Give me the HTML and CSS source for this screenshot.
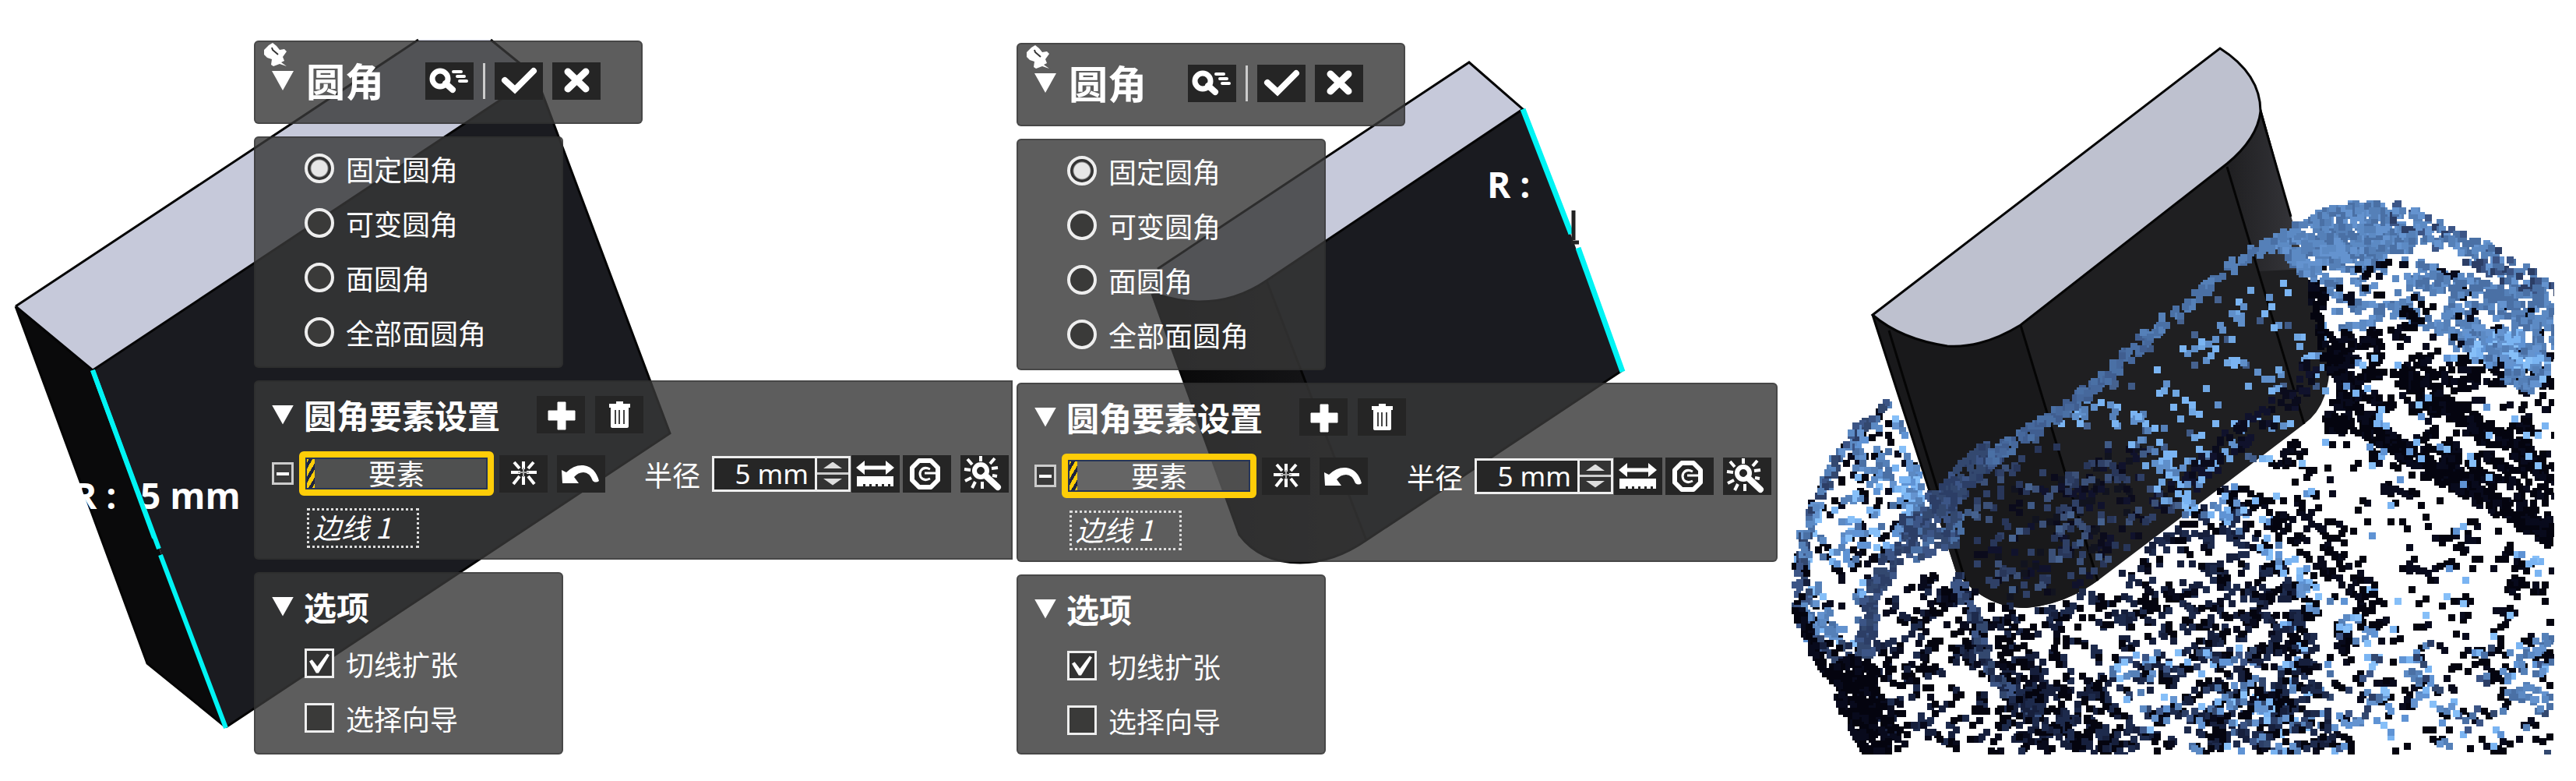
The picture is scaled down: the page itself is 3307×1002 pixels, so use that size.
FILE: index.html
```html
<!DOCTYPE html>
<html lang="zh-CN">
<head>
    <meta charset="UTF-8">
    <meta name="viewport" content="width=device-width, initial-scale=1.0">
    <title>圆角</title>
    <link rel="stylesheet" href="styles.css">
</head>
<body>
    <svg class="defs" aria-hidden="true">
        <symbol id="pin" viewBox="0 0 32 32">
            <path d="M2 10 L8 4 L13 1 L18 5 L22 10 L28 9 L31 12 L26 19 L28 24 L24 26 L31 31 L22 28 L14 31 L11 29 L12 22 L6 20 L2 16 Z" fill="#fff"/>
            <path d="M12 7 L13 10 L20 16" fill="none" stroke="#333" stroke-width="2"/>
        </symbol>
        <symbol id="search" viewBox="0 0 62 48">
            <circle cx="19" cy="21" r="10" fill="none" stroke="#fff" stroke-width="7"/>
            <path d="M26 27 L35 35" stroke="#fff" stroke-width="8" stroke-linecap="round"/>
            <path d="M36 12 H46 M41 18 H50 M44 24 H53" stroke="#fff" stroke-width="4" stroke-linecap="round"/>
        </symbol>
        <symbol id="check" viewBox="0 0 62 48">
            <path d="M13 23 L26 35 L50 11" fill="none" stroke="#fff" stroke-width="8" stroke-linecap="round"/>
        </symbol>
        <symbol id="cross" viewBox="0 0 62 48">
            <path d="M20 12 L43 34 M43 12 L20 34" stroke="#fff" stroke-width="9" stroke-linecap="round"/>
        </symbol>
        <symbol id="plus" viewBox="0 0 62 48">
            <path d="M27 8 H37 V19 H49 V31 H37 V43 H27 V31 H15 V19 H27 Z" fill="#fff" stroke="#fff" stroke-width="1" stroke-linejoin="round"/>
        </symbol>
        <symbol id="trash" viewBox="0 0 62 48">
            <path d="M27 10 V7 H36 V10 H45 V15 H43 V39 Q43 41 40 41 H23 Q20 41 20 39 V15 H18 V10 Z" fill="#fff"/>
            <path d="M26 18 V36 M31 18 V36 M37 18 V36" stroke="#444" stroke-width="2"/>
        </symbol>
        <symbol id="burst" viewBox="0 0 62 48">
            <path d="M15 22 H27 M35 22 H48 M31 8 V18 M31 27 V38 M19 9 L26 17 M44 9 L37 17 M18 37 L26 27 M45 37 L37 27" stroke="#fff" stroke-width="4"/>
            <path d="M24 22 H38 M31 16 V28" stroke="#aaa" stroke-width="2"/>
        </symbol>
        <symbol id="undo" viewBox="0 0 62 48">
            <path d="M6 19 L12 22 Q22 12 34 13 Q49 15 54 33 Q50 36 46 33 Q42 22 34 22 Q27 22 22 28 L28 36 H7 Z" fill="#fff"/>
        </symbol>
        <symbol id="ruler" viewBox="0 0 62 48">
            <path d="M14 16 H47" stroke="#fff" stroke-width="5"/>
            <path d="M6 16 L17 7 V25 Z M55 16 L44 7 V25 Z" fill="#fff"/>
            <path d="M7 27 H54 V40 H50 V37 H47 V40 H42 V37 H39 V40 H34 V37 H31 V40 H26 V37 H23 V40 H18 V37 H15 V40 H7 Z" fill="#fff"/>
        </symbol>
        <symbol id="circle" viewBox="0 0 62 48">
            <path d="M21 7 H36 L45 16 V32 L36 41 H21 L12 32 V16 Z" fill="none" stroke="#fff" stroke-width="6" stroke-linejoin="round"/>
            <path d="M35 18 Q27 14 23 20 Q21 24 23 28 Q27 34 35 30 M28 23 H45" fill="none" stroke="#fff" stroke-width="3"/>
        </symbol>
        <symbol id="wand" viewBox="0 0 62 48">
            <circle cx="26" cy="20" r="8" fill="none" stroke="#fff" stroke-width="6"/>
            <path d="M32 26 L48 41" stroke="#fff" stroke-width="8" stroke-linecap="round"/>
            <path d="M26 1 V8 M9 5 L15 12 M44 4 L38 11 M5 18 L13 19 M40 17 L48 16 M6 33 L14 29 M15 42 L19 34 M28 34 V43 M41 26 L47 27" stroke="#fff" stroke-width="4"/>
        </symbol>
    </svg>

    <main class="board">
        <section class="pane pane-before">
            <svg class="scene" viewBox="0 0 1300 968">
                <polygon points="20,393 119,475 290,933 189,851" fill="#0a0a0b"/>
                <polygon points="119,475 688,98 860,556 290,933" fill="#1a1b20"/>
                <polygon points="20,393 537,51 630,51 688,98 119,475" fill="#c6c9da"/>
                <path d="M20 393 L537 51 M630 51 L688 98 L860 556 L290 933 M20 393 L119 475 L688 98 M20 393 L189 851 L290 933" fill="none" stroke="#050505" stroke-width="3"/>
                <path d="M119 475 L204 704 M206 712 L290 934" stroke="#00f4f4" stroke-width="6"/>
                <text class="dim" x="94" y="653">R :</text>
                <text class="dim" x="180" y="653">5 mm</text>
                <path d="M119 475 L198 690" stroke="#00f4f4" stroke-width="6"/>
            </svg>
            <header class="panel head">
                <svg class="pin"><use href="#pin"/></svg>
                <span class="tri"></span>
                <h1>圆角</h1>
                <button class="icon first" aria-label="预览"><svg><use href="#search"/></svg></button>
                <span class="sep"></span>
                <button class="icon" aria-label="确定"><svg><use href="#check"/></svg></button>
                <button class="icon" aria-label="取消"><svg><use href="#cross"/></svg></button>
            </header>
            <div class="panel types">
                <label><input type="radio" name="type1" checked>固定圆角</label>
                <label><input type="radio" name="type1">可变圆角</label>
                <label><input type="radio" name="type1">面圆角</label>
                <label><input type="radio" name="type1">全部面圆角</label>
            </div>
            <div class="panel settings">
                <div class="row">
                    <span class="tri"></span>
                    <h2>圆角要素设置</h2>
                    <button class="icon first" aria-label="添加"><svg><use href="#plus"/></svg></button>
                    <button class="icon" aria-label="删除"><svg><use href="#trash"/></svg></button>
                </div>
                <div class="row fields">
                    <button class="fold" aria-label="折叠"></button>
                    <button class="element">要素</button>
                    <button class="icon" aria-label="反选"><svg><use href="#burst"/></svg></button>
                    <button class="icon undo" aria-label="撤销"><svg><use href="#undo"/></svg></button>
                    <label class="radius" for="radius1">半径</label>
                    <div class="spin">
                        <input id="radius1" type="text" value="5 mm">
                        <div class="steps"><button class="up" aria-label="增加"></button><button class="down" aria-label="减少"></button></div>
                    </div>
                    <button class="icon" aria-label="测量"><svg><use href="#ruler"/></svg></button>
                    <button class="icon circ" aria-label="圆"><svg><use href="#circle"/></svg></button>
                    <button class="icon wand" aria-label="估算"><svg><use href="#wand"/></svg></button>
                </div>
                <div class="edge">边线 1</div>
            </div>
            <div class="panel options">
                <div class="row title"><span class="tri"></span><h2>选项</h2></div>
                <label><input type="checkbox" checked>切线扩张</label>
                <label><input type="checkbox">选择向导</label>
            </div>
        </section>

        <section class="pane pane-after">
            <svg class="scene" viewBox="1305 0 977 968">
                <defs>
                    <linearGradient id="round" x1="0" x2="1" y1="0" y2="0">
                        <stop offset="0" stop-color="#070707"/>
                        <stop offset="1" stop-color="#19191c"/>
                    </linearGradient>
                </defs>
                <path d="M1479 377 L1591 686 Q1618 722 1669 722 Q1712 722 1754 693 L1626 360 Z" fill="url(#round)"/>
                <polygon points="1626,360 1955,140 2083,475 1754,693" fill="#1a1b20"/>
                <path d="M1486 345 L1886 80 L1955 140 L1626 360 Q1585 388 1537 387 Q1500 385 1479 374 Q1476 354 1486 345 Z" fill="#c6c9da"/>
                <path d="M1486 345 L1886 80 L1955 140 L1626 360 Q1585 388 1537 387 Q1500 385 1479 374 M1626 360 L1754 693 L2083 475 M1479 377 L1591 686 Q1618 722 1669 722 Q1712 722 1754 693" fill="none" stroke="#050505" stroke-width="3"/>
                <path d="M1955 140 L2017 300 M2026 318 L2083 477" stroke="#00f4f4" stroke-width="7"/>
                <path d="M2020 270 V308 M2017 311 H2027" stroke="#222" stroke-width="5"/>
                <text class="dim" x="1909" y="254">R :</text>
            </svg>
            <header class="panel head">
                <svg class="pin"><use href="#pin"/></svg>
                <span class="tri"></span>
                <h1>圆角</h1>
                <button class="icon first" aria-label="预览"><svg><use href="#search"/></svg></button>
                <span class="sep"></span>
                <button class="icon" aria-label="确定"><svg><use href="#check"/></svg></button>
                <button class="icon" aria-label="取消"><svg><use href="#cross"/></svg></button>
            </header>
            <div class="panel types">
                <label><input type="radio" name="type2" checked>固定圆角</label>
                <label><input type="radio" name="type2">可变圆角</label>
                <label><input type="radio" name="type2">面圆角</label>
                <label><input type="radio" name="type2">全部面圆角</label>
            </div>
            <div class="panel settings">
                <div class="row">
                    <span class="tri"></span>
                    <h2>圆角要素设置</h2>
                    <button class="icon first" aria-label="添加"><svg><use href="#plus"/></svg></button>
                    <button class="icon" aria-label="删除"><svg><use href="#trash"/></svg></button>
                </div>
                <div class="row fields">
                    <button class="fold" aria-label="折叠"></button>
                    <button class="element">要素</button>
                    <button class="icon" aria-label="反选"><svg><use href="#burst"/></svg></button>
                    <button class="icon undo" aria-label="撤销"><svg><use href="#undo"/></svg></button>
                    <label class="radius" for="radius2">半径</label>
                    <div class="spin">
                        <input id="radius2" type="text" value="5 mm">
                        <div class="steps"><button class="up" aria-label="增加"></button><button class="down" aria-label="减少"></button></div>
                    </div>
                    <button class="icon" aria-label="测量"><svg><use href="#ruler"/></svg></button>
                    <button class="icon circ" aria-label="圆"><svg><use href="#circle"/></svg></button>
                    <button class="icon wand" aria-label="估算"><svg><use href="#wand"/></svg></button>
                </div>
                <div class="edge">边线 1</div>
            </div>
            <div class="panel options">
                <div class="row title"><span class="tri"></span><h2>选项</h2></div>
                <label><input type="checkbox" checked>切线扩张</label>
                <label><input type="checkbox">选择向导</label>
            </div>
        </section>

        <section class="pane pane-cloud">
            <svg class="scene" viewBox="2287 0 1020 968">
                <defs>
                    <linearGradient id="side" x1="0" x2="1" y1="0" y2="0">
                        <stop offset="0" stop-color="#1f1f21"/>
                        <stop offset="1" stop-color="#38383d"/>
                    </linearGradient>
                </defs>
                <path d="M2404 404 L2511 734 Q2548 780 2601 780 Q2650 776 2693 745 L2958 544 Q2992 520 2991 459 L2903 140 Z" fill="#1f1f21"/>
                <path d="M2404 404 L2511 734 Q2548 780 2601 780 Q2650 776 2693 745 L2594 417 Z" fill="#19191b"/>
                <path d="M2859 214 L2903 140 L2960 345 L2900 348 Z" fill="url(#side)"/>
                <path d="M2404 404 L2850 62 Q2902 95 2902 143 Q2898 178 2859 210 L2594 417 Q2545 447 2500 444 Q2440 435 2404 404 Z" fill="#bec1cf" stroke="#050505" stroke-width="3"/>
                <path d="M2594 417 L2693 745 M2859 214 L2958 544 M2425 424 L2523 745 M2404 404 L2490 670 M2902 143 L2941 278" fill="none" stroke="#050505" stroke-width="3"/>
            </svg>
            <canvas id="cloud" class="scene" width="1020" height="968"></canvas>
        </section>
    </main>
    <script src="cloud.js"></script>
</body>
</html>
```
FILE: styles.css
```css
* {box-sizing: border-box;}
body {margin: 0; background: white; color: white; font: 36px/48px "Noto Sans CJK SC", sans-serif;}
h1, h2 {margin: 0; font-weight: bold; white-space: nowrap;}
h1 {font-size: 50px; line-height: 50px;}
h2 {font-size: 42px; line-height: 48px;}
button {padding: 0; border: 0; font: inherit; color: inherit;}
.defs {position: absolute; width: 0; height: 0;}

.board {display: grid; grid-template-columns: 1300fr 977fr 1020fr; gap: 5px;}
.pane {position: relative; display: flex; flex-direction: column; gap: 16px; min-width: 0;}
.pane-before {padding: 52px 0 0 326px;}
.pane-after {padding-top: 55px;}
.scene {position: absolute; top: 0; left: 0; width: 100%; height: auto;}
.dim {font: bold 46px "Open Sans", sans-serif; fill: white;}

.panel {position: relative; border-radius: 6px; background: rgba(56, 56, 56, .81); box-shadow: inset 0 0 0 2px rgba(40, 40, 40, .4);}
.head {display: flex; align-items: center; gap: 12px; width: 499px; height: 107px; padding: 0 0 4px 23px;}
.head h1 {margin: 0 2px 4px 4px;}
.pin {position: absolute; top: 2px; left: 11px; width: 32px; height: 32px;}
.tri {width: 28px; height: 25px; flex: none; background: white; clip-path: polygon(0 0, 100% 0, 50% 100%);}
.icon {width: 62px; height: 48px; flex: none; background: #252525;}
.icon svg {display: block; width: 62px; height: 48px;}
.head .first {margin-left: 39px;}
.sep {width: 3px; height: 46px; background: #ccc;}

.types, .options {width: 397px;}
.types {padding: 6px 0 11px 65px;}
.types label, .options label {display: flex; align-items: center; gap: 15px; height: 70px;}
input {margin: 0; color: inherit; font: inherit;}
input[type=radio], input[type=checkbox] {appearance: none; width: 38px; height: 38px; border: 4px solid #eee; background: #3a3a39;}
input[type=radio] {border-radius: 50%;}
input[type=radio]:checked {background: radial-gradient(circle, #e6e6e6 10px, #333 12px);}
input[type=checkbox] {border-width: 3px;}
input[type=checkbox]:checked {background: linear-gradient(#333, #333); position: relative;}
input[type=checkbox]:checked::after {content: ""; position: absolute; inset: 3px; background: white; clip-path: polygon(0 40%, 14% 32%, 40% 65%, 88% 2%, 100% 10%, 46% 98%, 34% 98%);}

.settings {padding: 20px 0 15px 23px;}
.pane-before .settings {border-radius: 6px 0 0 6px;}
.row {display: flex; align-items: center; gap: 13px;}
.settings .first {margin-left: 34px;}
.fields {gap: 7px; margin: 23px 0 16px;}
.fold {width: 28px; height: 29px; border: 3px solid #ccc; background: linear-gradient(white, white) center/16px 4px no-repeat, #3a3a3a;}
.element {width: 250px; height: 57px; padding-bottom: 4px; border: 8px solid #fecd08; border-radius: 6px; line-height: 36px;
    background: repeating-linear-gradient(120deg, #fecd08 0 5px, #1d2440 5px 9px) left/12px 100% no-repeat, rgba(110, 110, 110, .5); box-shadow: inset 0 0 0 2px #263556;}
.fields .undo {margin-left: 5px;}
.radius {margin: 0 8px 0 43px; white-space: nowrap;}
.spin {display: flex; width: 178px; height: 46px; border: 3px solid #eee; background: #262626;}
.spin input {width: 132px; padding: 0 8px 0 0; border: 0; border-right: 3px solid #eee; background: none; font-family: "Noto Sans", sans-serif; font-size: 35px; text-align: right;}
.steps {flex: 1; display: grid; gap: 3px; background: #ccc;}
.steps button {background: #333; position: relative;}
.steps button::after {content: ""; position: absolute; inset: 5px 8px; background: #ddd; clip-path: polygon(0 100%, 50% 0, 100% 100%);}
.steps .down::after {clip-path: polygon(0 0, 100% 0, 50% 100%);}
.spin + .icon {margin-left: -6px;}
.circ {margin-left: -3px;}
.wand {margin-left: 5px;}
.edge {width: 144px; height: 51px; margin-left: 45px; padding-left: 5px; border: 3px dotted #ddd; line-height: 40px; font-style: italic;}

.options {flex: 1; padding: 14px 0 9px 23px;}
.title {height: 60px; margin-bottom: 8px;}
.options label {padding-left: 42px;}
```
FILE: cloud.js
```js
const ctx = document.getElementById('cloud').getContext('2d');
ctx.translate(-2287, 0);
ctx.beginPath();
ctx.rect(2287, 0, 992, 968);
ctx.clip();

let seed = 7;
function rnd() {
    seed = (seed * 1664525 + 1013904223) % 4294967296;
    return seed / 4294967296;
}

const INK = ['#04040f', '#04040f', '#080a1c'];
const NAVY = ['#04040f', '#161f3c', '#1d2a4c'];
const SLATE = ['#2c3e66', '#33486f', '#3c5586'];
const BLUE = ['#5580b8', '#6493cf', '#4a70a5', '#5c8ac4'];
const SKY = ['#7ab4f2', '#86bff8', '#5f93d4'];

function dot(x, y, colors) {
    ctx.fillStyle = colors[Math.floor(rnd() * colors.length)];
    ctx.fillRect(Math.round(x / 3) * 3 - 4, Math.round(y / 3) * 3 - 4, 9, 9);
}

// points spread inside a polygon, sometimes in short runs
function fill(pts, count, colors, run) {
    const xs = pts.map(p => p[0]), ys = pts.map(p => p[1]);
    const x0 = Math.min(...xs), x1 = Math.max(...xs), y0 = Math.min(...ys), y1 = Math.max(...ys);
    const inside = (x, y) => {
        let hit = false;
        for (let i = 0, j = pts.length - 1; i < pts.length; j = i++) {
            if ((ys[i] > y) !== (ys[j] > y) && x < (xs[j] - xs[i]) * (y - ys[i]) / (ys[j] - ys[i]) + xs[i]) hit = !hit;
        }
        return hit;
    };
    let n = 0;
    while (n < count) {
        let x = x0 + rnd() * (x1 - x0), y = y0 + rnd() * (y1 - y0);
        if (!inside(x, y)) continue;
        dot(x, y, colors);
        n++;
        while (run && rnd() < run) {
            x += rnd() < .5 ? -7 : 7;
            y += (rnd() - .5) * 16;
            if (inside(x, y)) dot(x, y, colors);
            n++;
        }
    }
}

// points along a polyline
function band(pts, width, density, colors) {
    for (let i = 1; i < pts.length; i++) {
        const [ax, ay] = pts[i - 1], [bx, by] = pts[i];
        const len = Math.hypot(bx - ax, by - ay);
        const n = len * width * density / 60;
        for (let k = 0; k < n; k++) {
            const t = rnd(), o = (rnd() - .5) * width;
            dot(ax + (bx - ax) * t - (by - ay) / len * o, ay + (by - ay) * t + (bx - ax) / len * o, colors);
        }
    }
}

const left = [[2425, 515], [2385, 545], [2345, 600], [2312, 660], [2304, 730], [2308, 800], [2330, 850], [2380, 830], [2410, 740], [2475, 650], [2440, 540]];
const lowLeft = [[2420, 770], [2480, 735], [2511, 740], [2601, 785], [2640, 966], [2420, 966], [2390, 880]];
const lowMid = [[2560, 785], [2610, 785], [2693, 750], [2800, 668], [2860, 620], [2960, 760], [3000, 966], [2580, 966]];
const right = [[2860, 620], [2958, 548], [3040, 570], [3120, 620], [3279, 720], [3279, 966], [2900, 966]];
const block = [[2500, 640], [2700, 480], [2900, 330], [2960, 330], [2988, 450], [2988, 505], [2950, 545], [2693, 740], [2601, 778], [2548, 770], [2511, 734]];

// underside of the scan
fill(right, 540, INK, .5);
fill(right, 80, SKY, .1);
fill([[2860, 810], [3279, 830], [3279, 966], [2860, 966]], 180, SLATE.concat(BLUE, SKY), .5);
fill([[3225, 810], [3279, 800], [3279, 900], [3215, 900]], 45, BLUE, .5);
fill(lowMid, 900, NAVY, .5);
fill(lowMid, 160, INK, .5);
fill([[2700, 840], [2900, 830], [2960, 966], [2760, 966]], 110, BLUE.concat(SKY, SLATE), .4);
fill(lowLeft, 400, NAVY.concat(INK), .5);
band([[2800, 650], [2860, 650], [2930, 710], [2980, 780], [3050, 820]], 30, .35, BLUE.concat(SKY));
band([[2930, 650], [3010, 740], [3050, 790]], 50, .5, INK);
band([[2510, 740], [2540, 800], [2550, 850], [2580, 890], [2620, 920]], 16, 1.4, SLATE.concat('#1d2a4c'));
band([[2580, 900], [2640, 930], [2740, 966]], 40, .9, NAVY);

// left bulge
fill(left, 120, INK, .1);
fill(left, 170, BLUE.concat(SKY), .3);
band([[2425, 518], [2385, 550], [2350, 605], [2322, 670], [2312, 740]], 12, 1.9, SLATE.concat(BLUE));
band([[2308, 720], [2314, 790], [2338, 835], [2390, 835]], 22, 1, NAVY.concat(SLATE));
band([[2450, 610], [2465, 650], [2440, 690]], 24, 2, BLUE.concat(SKY));
band([[2325, 770], [2350, 820]], 30, 1, BLUE);
band([[2308, 780], [2328, 835], [2352, 870]], 12, 2, INK);
fill([[2345, 860], [2390, 835], [2410, 860], [2405, 966], [2392, 966], [2365, 915]], 240, INK, .2);
fill([[2390, 870], [2430, 900], [2440, 966], [2390, 966]], 75, INK, .4);

// points seen on the block
fill([[2530, 640], [2700, 560], [2840, 600], [2693, 740], [2601, 778], [2530, 740]], 160, ['#10122c', '#11131f', '#0b0b1c'], .5);
fill([[2520, 640], [2620, 560], [2760, 600], [2800, 650], [2693, 735], [2601, 775], [2525, 740]], 130, ['#2f4066', '#3b5078', '#283659'], .1);
fill(block, 50, ['#46628f', '#3f5a86'], .1);
fill([[2700, 540], [2900, 350], [2985, 380], [2988, 500], [2940, 545], [2780, 650]], 105, ['#6fa6e2', '#7ab4f2', '#5f8fca'], .15);
band([[2810, 620], [2860, 570], [2930, 520], [2970, 470]], 30, .7, ['#0a0b1c', '#10122c']);
band([[2640, 525], [2700, 530], [2760, 550], [2790, 610], [2830, 640]], 34, .4, ['#5f8fca', '#5580b8', '#7ab4f2']);

// rim
band([[2393, 840], [2402, 770], [2430, 715], [2480, 670]], 22, 1.9, SLATE);
band([[2450, 690], [2520, 665]], 60, 1.3, SLATE.concat('#4a70a5'));
band([[2480, 655], [2520, 615], [2560, 580]], 34, 2, SLATE);
band([[2550, 590], [2620, 545], [2690, 495], [2760, 430]], 16, 2, ['#46689c', '#4a70a5', '#405e90']);
band([[2755, 432], [2820, 380], [2880, 330], [2935, 305]], 16, 1, ['#4a70a5', '#5580b8']);

// right shoulder
const fan = [[2970, 320], [3100, 330], [3279, 390], [3279, 470], [3250, 510], [3160, 450], [3080, 410], [3000, 430]];
fill([[3000, 440], [3279, 450], [3279, 690], [3130, 600], [2990, 540]], 340, INK, .5);
fill([[3060, 455], [3279, 440], [3279, 520], [3100, 490]], 60, INK, .3);
fill(fan, 380, BLUE, .6);
fill(fan, 60, INK, .3);
fill([[3140, 420], [3279, 430], [3270, 500], [3170, 460]], 120, BLUE.concat(SKY), .5);
band([[2974, 360], [2984, 430], [3005, 470]], 20, 1.4, INK);
band([[2990, 440], [3080, 430], [3100, 400]], 26, .9, INK);
band([[2990, 450], [3020, 480], [3010, 530]], 40, 1.3, INK);
band([[3070, 475], [3120, 505], [3170, 540], [3220, 570], [3279, 610]], 22, 2, INK);
band([[2985, 540], [3040, 550], [3120, 600], [3200, 645], [3279, 690]], 24, 2, INK);
band([[3100, 580], [3180, 610], [3279, 660]], 60, .7, INK);
fill([[3000, 450], [3279, 460], [3279, 680], [3000, 560]], 40, SKY, .1);
fill([[2915, 305], [2970, 275], [3000, 261], [3050, 261], [3085, 275], [3110, 320], [3060, 325], [2985, 345], [2975, 365], [2940, 340]], 460, BLUE, .3);
band([[3070, 275], [3140, 305], [3210, 340], [3279, 385]], 34, 1.3, BLUE.concat('#3c5586', '#2c3e66'));
band([[3100, 350], [3180, 375], [3262, 400], [3275, 440]], 36, .9, BLUE.concat('#4a70a5'));
```
